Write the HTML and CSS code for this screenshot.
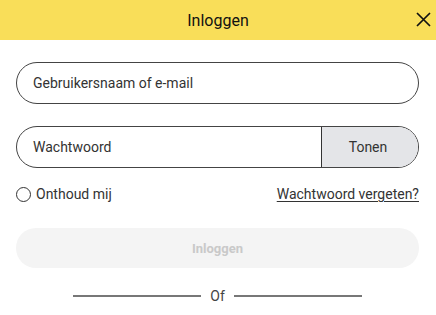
FILE: index.html
```html
<!DOCTYPE html>
<html lang="nl">
<head>
<meta charset="utf-8">
<title>Inloggen</title>
<link rel="stylesheet" href="styles.css">
</head>
<body>
<header class="header">
  <h1 class="title">Inloggen</h1>
  <button class="close" aria-label="Sluiten">
    <svg width="15" height="15" viewBox="0 0 15 15"><path d="M1 1 L14 14 M14 1 L1 14" stroke="#111" stroke-width="1.7" fill="none"/></svg>
  </button>
</header>
<main class="form">
  <div class="field">
    <span class="placeholder">Gebruikersnaam of e-mail</span>
  </div>
  <div class="field field-pw">
    <span class="placeholder">Wachtwoord</span>
    <span class="show">Tonen</span>
  </div>
  <div class="options">
    <label class="remember"><span class="radio"></span>Onthoud mij</label>
    <a class="forgot" href="#">Wachtwoord vergeten?</a>
  </div>
  <button class="submit">Inloggen</button>
  <div class="divider"><span class="line"></span><span class="of">Of</span><span class="line"></span></div>
</main>
</body>
</html>
```
FILE: styles.css
```css
* { box-sizing: border-box; }
body {
  margin: 0;
  font-family: Roboto, "Liberation Sans", sans-serif;
  background: #fff;
  color: #222;
  width: 436px;
  height: 315px;
  overflow: hidden;
}
.header {
  height: 40px;
  background: #f9de59;
  display: flex;
  align-items: center;
  justify-content: center;
  position: relative;
}
.title {
  margin: 0;
  font-size: 16px;
  font-weight: 400;
  color: #111;
}
.close {
  position: absolute;
  right: 5px;
  top: 12px;
  width: 15px;
  height: 15px;
  padding: 0;
  border: 0;
  background: none;
  display: flex;
}
.form {
  padding: 22px 17px 0 16px;
  display: flex;
  flex-direction: column;
}
.field {
  height: 42px;
  border: 1px solid #444;
  border-radius: 21px;
  display: flex;
  align-items: center;
  padding-left: 16px;
  overflow: hidden;
  font-size: 14px;
  color: #333;
}
.field + .field { margin-top: 22px; }
.placeholder { flex: 1; }
.show {
  width: 97px;
  height: 100%;
  background: #e4e5e8;
  border-left: 1px solid #333;
  display: flex;
  align-items: center;
  justify-content: center;
  font-size: 14px;
  color: #333;
  padding-right: 4px;
}
.options {
  margin-top: 17px;
  display: flex;
  justify-content: space-between;
  align-items: center;
  height: 18px;
  font-size: 14px;
  color: #333;
}
.remember {
  display: flex;
  align-items: center;
  gap: 5px;
}
.radio {
  width: 15px;
  height: 15px;
  border: 1px solid #333;
  border-radius: 50%;
}
.forgot {
  color: #333;
  text-decoration: underline;
  text-underline-offset: 2px;
}
.submit {
  margin-top: 25px;
  height: 40px;
  border: 0;
  border-radius: 20px;
  background: #f4f4f4;
  color: #c9c9c9;
  font-family: Roboto, "Liberation Sans", sans-serif;
  font-weight: 700;
  font-size: 13px;
}
.divider {
  margin-top: 19px;
  display: flex;
  align-items: center;
  justify-content: center;
  gap: 9px;
}
.line {
  width: 128px;
  height: 1.5px;
  background: #777;
}
.of {
  font-size: 14px;
  color: #444;
  line-height: 18px;
}
```
